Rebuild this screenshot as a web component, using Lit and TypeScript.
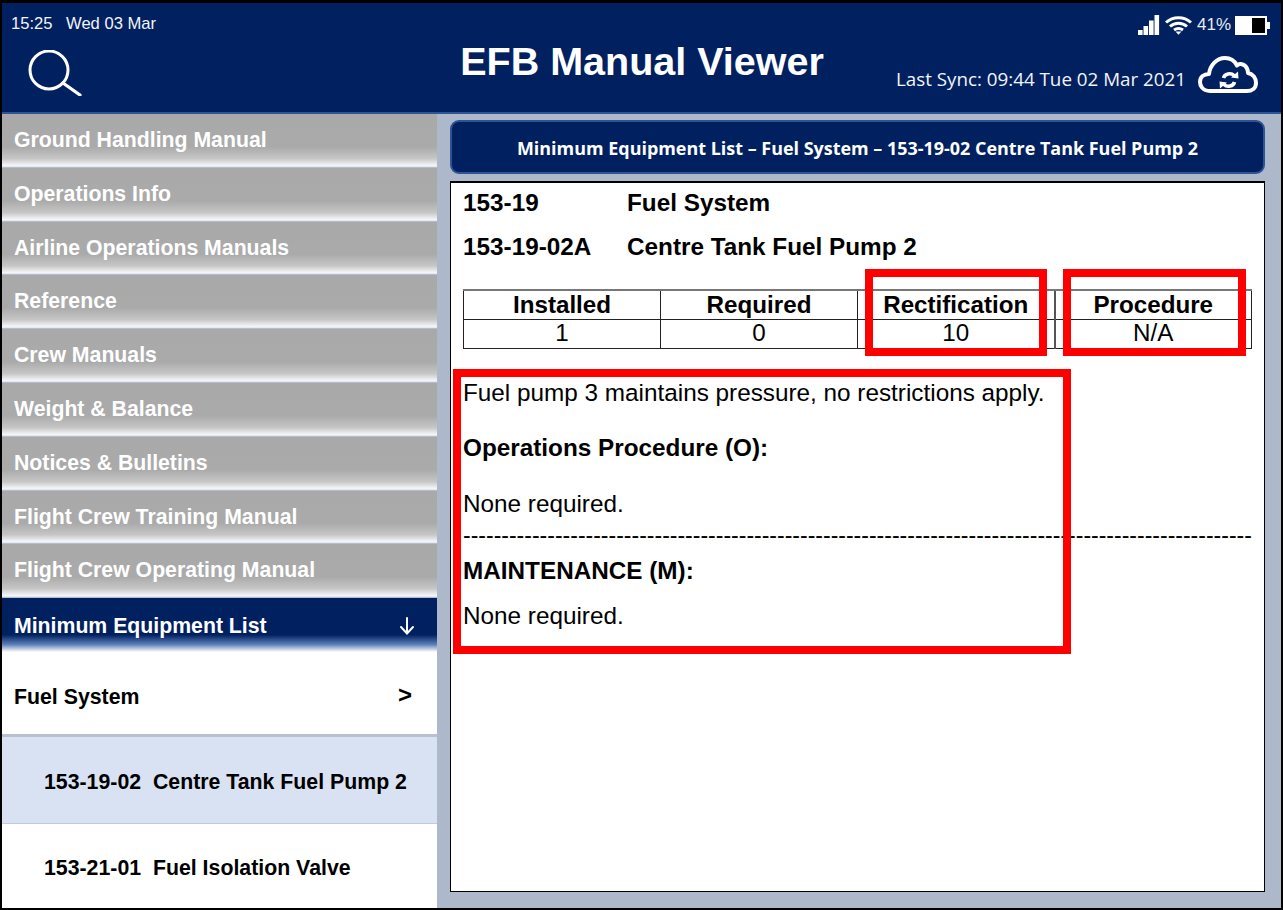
import { LitElement, html, css, svg } from "lit";
import { customElement } from "lit/decorators.js";

const NAV = [
  "Ground Handling Manual",
  "Operations Info",
  "Airline Operations Manuals",
  "Reference",
  "Crew Manuals",
  "Weight & Balance",
  "Notices & Bulletins",
  "Flight Crew Training Manual",
  "Flight Crew Operating Manual",
];

const searchIcon = svg`<svg class="search" width="56" height="46" viewBox="0 0 56 46" fill="none" stroke="#fff" stroke-linecap="round">
  <circle cx="21" cy="20" r="19" stroke-width="3"/>
  <path d="M35 33 L52 45" stroke-width="3.2"/>
</svg>`;

const statusIcons = svg`<svg width="22" height="22" viewBox="0 0 22 22" fill="#fff">
  <rect x="0" y="16" width="4.6" height="5"/><rect x="5.5" y="12" width="4.6" height="9"/><rect x="11" y="6.5" width="4.6" height="14.5"/><rect x="16.5" y="1" width="4.6" height="20"/>
</svg>`;

const wifi = svg`<svg width="27" height="20" viewBox="0 0 27 20" fill="none" stroke="#fff" stroke-width="3">
  <path d="M1 7.5 C8 1 19 1 26 7.5"/><path d="M5 11.5 C10 7 17 7 22 11.5"/><path d="M9 15 C12 13 15 13 18 15"/>
  <path d="M10.5 16.5 L13.5 19.8 L16.5 16.5 Z" fill="#fff" stroke="none"/>
</svg>`;

const battery = svg`<svg width="35" height="19" viewBox="0 0 35 19">
  <rect x="1" y="1" width="30" height="17" fill="#000" stroke="#fff" stroke-width="2"/>
  <rect x="2" y="2" width="15" height="15" fill="#fff"/>
  <rect x="32" y="6" width="3" height="7" fill="#fff"/>
</svg>`;

const cloud = svg`<svg width="60" height="38" viewBox="0 0 60 38" fill="none" stroke="#fff" stroke-width="4" stroke-linejoin="round">
  <path d="M12 35 C4 35 2 29 2 26 C2 21 6 18 11 18 C12 9 19 2 27 2 C33 2 37 5.5 39 9.5 C41 7 47 7.5 49 12.5 C50 14.5 50 15.5 50 17 C55 18 58 22 58 27 C58 32 54 35 49 35 Z"/>
  <path d="M25.5 22 C26.5 17.5 33 16.5 36 19.5" stroke-width="3.6"/>
  <path d="M36.5 26 C35.5 30.5 29 31.5 26 28.5" stroke-width="3.6"/>
  <path d="M33 21.5 L40.5 22.5 L40 15.5 Z" fill="#fff" stroke="none"/>
  <path d="M29 26.5 L21.5 25.5 L22 32.5 Z" fill="#fff" stroke="none"/>
</svg>`;

const arrowDown = svg`<svg width="16" height="18" viewBox="0 0 16 18" fill="none" stroke="#fff" stroke-width="2" stroke-linecap="round">
  <path d="M8 1 V16"/><path d="M2 10 L8 16.5 L14 10"/>
</svg>`;

@customElement("app-root")
export class AppRoot extends LitElement {
  static styles = css`
    :host {
      display: block;
      width: 1283px;
      height: 910px;
      font-family: "Liberation Sans", Arial, sans-serif;
    }
    .frame {
      position: relative;
      box-sizing: border-box;
      width: 1283px;
      height: 910px;
      border: 2px solid #000;
      border-top-width: 3px;
      display: grid;
      grid-template-rows: 111px 1fr;
      background: #adb9ca;
      overflow: hidden;
    }
    .header {
      box-sizing: border-box;
      background: #002060;
      border-bottom: 2px solid #2f5496;
      color: #fff;
      display: grid;
      grid-template-columns: 1fr auto 1fr;
      position: relative;
    }
    .left {
      display: flex;
      flex-direction: column;
      padding: 12px 0 0 9px;
    }
    .clock {
      font-size: 16.6px;
      line-height: 18px;
      display: flex;
      gap: 13.5px;
      color: #f2f4f8;
    }
    .search {
      margin: 17px 0 0 17px;
      display: block;
    }
    .title {
      font-size: 39.5px;
      font-weight: 700;
      line-height: 44px;
      padding-top: 36px;
    }
    .right {
      display: flex;
      flex-direction: column;
      align-items: flex-end;
      padding: 10px 12px 0 0;
    }
    .status {
      display: flex;
      align-items: center;
      height: 24px;
      gap: 5px;
      font-size: 17px;
      color: #e8ecf3;
    }
    .status .pct {
      margin-right: -1px;
    }
    .sync {
      display: flex;
      align-items: center;
      gap: 12px;
      margin-top: 19px;
      padding-right: 12px;
      font-family: "Open Sans", "Noto Sans", sans-serif;
      font-size: 18.8px;
      color: #f2f4f8;
    }
    .sync span {
      line-height: 24px;
      margin-top: 8px;
    }
    .body {
      display: grid;
      grid-template-columns: 435px 1fr;
      min-height: 0;
    }
    .side {
      display: flex;
      flex-direction: column;
      background: #fff;
      min-height: 0;
      overflow: hidden;
    }
    .nav {
      box-sizing: border-box;
      height: 53.8px;
      flex: none;
      display: flex;
      align-items: flex-start;
      padding: 13px 12px 0 12px;
      font-size: 21.25px;
      line-height: 26px;
      font-weight: 700;
      color: #fff;
      background: linear-gradient(#a9a9a9 0, #aaa 62%, #c6c6c6 84%, #f4f5f8 97%, #dfe3ea 100%);
      border-bottom: 1px solid #b4bdcc;
    }
    .nav.active {
      justify-content: space-between;
      padding: 15px 22px 0 12px;
      background: linear-gradient(#002060 0, #002060 68%, #5c7fb8 86%, #fff 100%);
      border-bottom: none;
    }
    .nav.active svg {
      margin-top: 4px;
    }
    .sub {
      box-sizing: border-box;
      flex: none;
      display: flex;
      align-items: center;
      justify-content: space-between;
      color: #000;
      font-size: 21.3px;
      font-weight: 700;
      padding-left: 12px;
      padding-right: 25px;
    }
    .sub.group {
      height: 85px;
      padding-top: 10px;
      background: #fff;
      border-bottom: 3px solid #b8c1cf;
    }
    .sub.group b {
      font-size: 24px;
      margin-top: -6px;
    }
    .sub.leaf {
      height: 87px;
      padding-left: 42px;
      padding-top: 2px;
      white-space: pre;
    }
    .sub.sel {
      padding-top: 6px;
      background: #d9e2f3;
      border-bottom: 1px solid #c0cadb;
    }
    .main {
      display: flex;
      flex-direction: column;
      padding: 6px 17px 16px 13px;
      gap: 7px;
      min-height: 0;
    }
    .bar {
      box-sizing: border-box;
      height: 54px;
      flex: none;
      background: #002060;
      border: 2px solid #2f5496;
      border-radius: 9px;
      color: #fff;
      font-family: "Open Sans", "Noto Sans", sans-serif;
      font-weight: 700;
      font-size: 17.95px;
      padding-top: 2px;
      display: flex;
      align-items: center;
      justify-content: center;
    }
    .content {
      box-sizing: border-box;
      flex: 1;
      background: #fff;
      border: 1.5px solid #000;
      border-top-width: 2px;
      padding: 6px 12px 0 12px;
      min-height: 0;
      color: #000;
    }
    .hd {
      display: grid;
      grid-template-columns: 164px 1fr;
      font-weight: 700;
      font-size: 24.3px;
      line-height: 28px;
      margin-bottom: 16px;
    }
    table {
      border-collapse: collapse;
      table-layout: fixed;
      width: 789px;
      margin-top: 28px;
    }
    th, td {
      border: 1px solid #222;
      padding: 0;
      text-align: center;
      font-size: 24.2px;
    }
    th {
      height: 28px;
      line-height: 28px;
      font-weight: 700;
      border-top: 2px solid #777;
    }
    td {
      height: 26px;
      line-height: 26px;
      padding-bottom: 2px;
    }
    .proc {
      border-left: 2px solid #555;
    }
    .copy {
      margin-top: 30px;
      font-size: 24.3px;
      line-height: 28px;
    }
    .copy p {
      margin: 0;
    }
    .copy .b {
      font-weight: 700;
    }
    .copy .p1 { margin-bottom: 27px; }
    .copy .p2 { margin-bottom: 28px; }
    .dash {
      white-space: nowrap;
      font-size: 23px;
      line-height: 16px;
      margin-top: 9px;
      margin-bottom: 14px;
    }
    .copy .p4 { margin-bottom: 17px; }
    .mark {
      position: absolute;
      box-sizing: border-box;
      border: 8px solid #ff0000;
      pointer-events: none;
    }
    .m1 { left: 863px; top: 266px; width: 182px; height: 87px; }
    .m2 { left: 1061px; top: 266px; width: 183px; height: 87px; }
    .m3 { left: 451px; top: 366px; width: 618px; height: 285px; }
  `;

  render() {
    return html`
      <div class="frame">
        <header class="header">
          <div class="left">
            <div class="clock"><span>15:25</span><span>Wed 03 Mar</span></div>
            ${searchIcon}
          </div>
          <div class="title">EFB Manual Viewer</div>
          <div class="right">
            <div class="status">${statusIcons}${wifi}<span class="pct">41%</span>${battery}</div>
            <div class="sync"><span>Last Sync: 09:44 Tue 02 Mar 2021</span>${cloud}</div>
          </div>
        </header>
        <div class="body">
          <aside class="side">
            ${NAV.map((n) => html`<div class="nav">${n}</div>`)}
            <div class="nav active"><span>Minimum Equipment List</span>${arrowDown}</div>
            <div class="sub group"><span>Fuel System</span><b>&gt;</b></div>
            <div class="sub leaf sel">153-19-02  Centre Tank Fuel Pump 2</div>
            <div class="sub leaf">153-21-01  Fuel Isolation Valve</div>
          </aside>
          <main class="main">
            <div class="bar">Minimum Equipment List – Fuel System – 153-19-02 Centre Tank Fuel Pump 2</div>
            <section class="content">
              <div class="hd"><span>153-19</span><span>Fuel System</span></div>
              <div class="hd"><span>153-19-02A</span><span>Centre Tank Fuel Pump 2</span></div>
              <table>
                <tr>
                  <th>Installed</th>
                  <th>Required</th>
                  <th>Rectification</th>
                  <th class="proc">Procedure</th>
                </tr>
                <tr><td>1</td><td>0</td><td>10</td><td class="proc">N/A</td></tr>
              </table>
              <div class="copy">
                <p class="p1">Fuel pump 3 maintains pressure, no restrictions apply.</p>
                <p class="b p2">Operations Procedure (O):</p>
                <p>None required.</p>
                <div class="dash">${"-".repeat(103)}</div>
                <p class="b p4">MAINTENANCE (M):</p>
                <p>None required.</p>
              </div>
            </section>
          </main>
        </div>
        <div class="mark m1"></div>
        <div class="mark m2"></div>
        <div class="mark m3"></div>
      </div>
    `;
  }
}
